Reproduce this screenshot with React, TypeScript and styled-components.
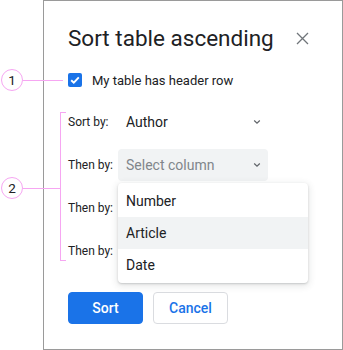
import React from "react";
import styled, { createGlobalStyle } from "styled-components";

const Global = createGlobalStyle`
  html, body { margin: 0; padding: 0; background: #fff; }
  body { font-family: Roboto, "Liberation Sans", Arial, sans-serif; color: #202124; }
`;

const Page = styled.div`
  position: relative;
  width: 343px;
  height: 350px;
  overflow: hidden;
`;

const Dialog = styled.div`
  box-sizing: border-box;
  margin-left: 43px;
  width: 300px;
  height: 350px;
  border: 1px solid #9a9a9a;
  padding: 23px 24px 0 24px;
  display: flex;
  flex-direction: column;
  background: #fff;
`;

const Header = styled.div`
  display: flex;
  align-items: center;
  justify-content: space-between;
  height: 28px;
`;

const Title = styled.h1`
  margin: 0;
  font-size: 22.5px;
  line-height: 28px;
  font-weight: 400;
  color: #202124;
`;

const CloseBtn = styled.button`
  border: 0;
  background: none;
  padding: 0;
  margin-right: 8px;
  width: 16px;
  height: 16px;
  display: flex;
  align-items: center;
  justify-content: center;
`;

const CheckRow = styled.label`
  display: flex;
  align-items: center;
  gap: 10px;
  height: 20px;
  margin-top: 18px;
  font-size: 13px;
  color: #202124;
`;

const CheckBox = styled.span`
  width: 14px;
  height: 14px;
  border-radius: 2px;
  background: #1a73e8;
  display: flex;
  align-items: center;
  justify-content: center;
`;

const Rows = styled.div`
  display: flex;
  flex-direction: column;
  gap: 11px;
  margin-top: 16px;
`;

const Row = styled.div`
  position: relative;
  display: flex;
  align-items: center;
  height: 32px;
`;

const Label = styled.span`
  width: 50px;
  font-size: 12px;
  color: #202124;
`;

const Select = styled.div<{ $open?: boolean; $placeholder?: boolean }>`
  box-sizing: border-box;
  width: 150px;
  height: 32px;
  border-radius: 4px;
  padding: 0 6px 0 8px;
  display: flex;
  align-items: center;
  justify-content: space-between;
  font-size: 14px;
  background: ${(p) => (p.$open ? "#f1f3f4" : "transparent")};
  color: ${(p) => (p.$placeholder ? "#80868b" : "#202124")};
`;

const Menu = styled.div`
  position: absolute;
  left: 50px;
  top: 34px;
  width: 190px;
  padding: 2px 0;
  background: #fff;
  border-radius: 4px;
  box-shadow: 0 1px 2px rgba(60, 64, 67, 0.22), 0 2px 6px 2px rgba(60, 64, 67, 0.1);
  z-index: 2;
`;

const MenuItem = styled.div<{ $active?: boolean }>`
  height: 32px;
  display: flex;
  align-items: center;
  padding: 0 8px;
  font-size: 14px;
  color: #202124;
  background: ${(p) => (p.$active ? "#f1f3f4" : "transparent")};
`;

const Buttons = styled.div`
  display: flex;
  gap: 10px;
  margin-top: 25px;
`;

const Button = styled.button<{ $primary?: boolean }>`
  box-sizing: border-box;
  width: 75px;
  height: 32px;
  border-radius: 4px;
  font-family: Roboto, "Liberation Sans", Arial, sans-serif;
  font-size: 14px;
  font-weight: 500;
  border: 1px solid ${(p) => (p.$primary ? "#1a73e8" : "#dadce0")};
  background: ${(p) => (p.$primary ? "#1a73e8" : "#fff")};
  color: ${(p) => (p.$primary ? "#fff" : "#1a73e8")};
`;

const PINK = "#f6a6f2";

const Bubble = styled.div<{ $top: number }>`
  position: absolute;
  left: 1px;
  top: ${(p) => p.$top}px;
  box-sizing: border-box;
  width: 22px;
  height: 22px;
  border-radius: 50%;
  border: 1px solid ${PINK};
  background: #fff;
  display: flex;
  align-items: center;
  justify-content: center;
  font-size: 13.5px;
  color: #202124;
  z-index: 3;
`;

const HLine = styled.div<{ $top: number; $left: number; $width: number }>`
  position: absolute;
  top: ${(p) => p.$top}px;
  left: ${(p) => p.$left}px;
  width: ${(p) => p.$width}px;
  height: 1px;
  background: ${PINK};
  z-index: 3;
`;

const Bracket = styled.div`
  position: absolute;
  left: 60px;
  top: 112px;
  width: 6px;
  height: 149px;
  box-sizing: border-box;
  border: 1px solid ${PINK};
  border-right: 0;
  z-index: 3;
`;

const Chevron = () => (
  <svg width="10" height="6" viewBox="0 0 10 6">
    <path d="M2.2 1.5 L5 4.2 L7.8 1.5" fill="none" stroke="#5f6368" strokeWidth="1.2" />
  </svg>
);

export default function App() {
  return (
    <Page>
      <Global />
      <Dialog>
        <Header>
          <Title>Sort table ascending</Title>
          <CloseBtn aria-label="Close">
            <svg width="13" height="13" viewBox="0 0 13 13">
              <path d="M1 1 L12 12 M12 1 L1 12" stroke="#70757a" strokeWidth="1.3" />
            </svg>
          </CloseBtn>
        </Header>
        <CheckRow>
          <CheckBox>
            <svg width="12" height="12" viewBox="0 0 12 12">
              <path d="M2.2 6.2 L4.8 8.7 L9.8 3.4" fill="none" stroke="#fff" strokeWidth="1.9" />
            </svg>
          </CheckBox>
          My table has header row
        </CheckRow>
        <Rows>
          <Row>
            <Label>Sort by:</Label>
            <Select>
              Author
              <Chevron />
            </Select>
          </Row>
          <Row>
            <Label>Then by:</Label>
            <Select $open $placeholder>
              Select column
              <Chevron />
            </Select>
            <Menu>
              <MenuItem>Number</MenuItem>
              <MenuItem $active>Article</MenuItem>
              <MenuItem>Date</MenuItem>
            </Menu>
          </Row>
          <Row>
            <Label>Then by:</Label>
          </Row>
          <Row>
            <Label>Then by:</Label>
          </Row>
        </Rows>
        <Buttons>
          <Button $primary>Sort</Button>
          <Button>Cancel</Button>
        </Buttons>
      </Dialog>
      <Bubble $top={69}>1</Bubble>
      <HLine $top={80} $left={23} $width={40} />
      <Bubble $top={177}>2</Bubble>
      <HLine $top={188} $left={23} $width={37} />
      <Bracket />
    </Page>
  );
}
